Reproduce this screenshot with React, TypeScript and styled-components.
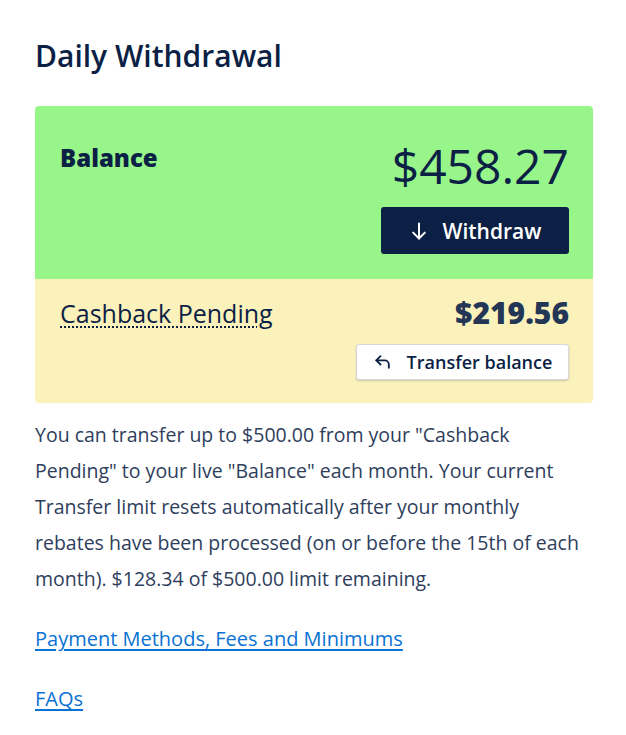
import React from 'react'
import styled, { createGlobalStyle } from 'styled-components'

const GlobalStyle = createGlobalStyle`
  body {
    margin: 0;
    background: #ffffff;
    font-family: 'Open Sans', 'Noto Sans', sans-serif;
  }
`

const Page = styled.div`
  padding: 32px 33px 20px 35px;
`

const Title = styled.h1`
  margin: 0 0 26px;
  font-size: 30px;
  font-weight: 600;
  color: #0c1f45;
  line-height: 48px;
`

const Card = styled.div`
  border-radius: 4px;
  overflow: hidden;
`

const Section = styled.div<{ $tone: 'green' | 'yellow' }>`
  background: ${(p) => (p.$tone === 'green' ? '#98f58a' : '#fbf1bb')};
  padding: ${(p) => (p.$tone === 'green' ? '30px 24px 25px 25px' : '16px 24px 23px 25px')};
  display: flex;
  flex-direction: column;
  align-items: stretch;
`

const Row = styled.div`
  display: flex;
  justify-content: space-between;
  align-items: flex-start;
`

const BalanceLabel = styled.div`
  font-size: 24px;
  font-weight: 800;
  color: #0c1f45;
  margin-top: 5px;
`

const BalanceAmount = styled.div`
  font-size: 48px;
  font-weight: 400;
  color: #0c1f45;
  line-height: 60px;
`

const PendingLabel = styled.span`
  font-size: 25px;
  color: #0c1f45;
  text-decoration: underline dotted #0c1f45;
  text-decoration-thickness: 2px;
  text-underline-offset: 3px;
  line-height: 36px;
`

const PendingAmount = styled.div`
  font-size: 30px;
  font-weight: 800;
  color: #243656;
  line-height: 36px;
`

const ButtonRow = styled.div<{ $gap: number }>`
  display: flex;
  justify-content: flex-end;
  margin-top: ${(p) => p.$gap}px;
`

const PrimaryButton = styled.button`
  display: flex;
  align-items: center;
  justify-content: center;
  gap: 14px;
  width: 188px;
  height: 47px;
  border: none;
  border-radius: 3px;
  background: #0c1f45;
  color: #ffffff;
  font-family: inherit;
  font-size: 21px;
  font-weight: 600;
  cursor: pointer;
`

const SecondaryButton = styled.button`
  display: flex;
  align-items: center;
  justify-content: center;
  gap: 14px;
  width: 213px;
  height: 36px;
  border: 1px solid #d4d8df;
  border-radius: 3px;
  background: #ffffff;
  box-shadow: 0 1px 2px rgba(0, 0, 0, 0.18);
  color: #0c1f45;
  font-family: inherit;
  font-size: 18px;
  font-weight: 600;
  cursor: pointer;
`

const Note = styled.p`
  margin: 14px 0 0;
  max-width: 550px;
  font-size: 19.5px;
  line-height: 36px;
  color: #2e3e5c;
`

const LinkItem = styled.a`
  display: block;
  margin-top: 24px;
  font-size: 20px;
  line-height: 36px;
  color: #0a72d4;
  text-decoration: underline;
  text-underline-offset: 3px;
`

const ArrowDown = () => (
  <svg width="20" height="20" viewBox="0 0 24 24" fill="none" stroke="currentColor" strokeWidth="2.4" strokeLinecap="round" strokeLinejoin="round">
    <path d="M12 3v18" />
    <path d="M5 14l7 7 7-7" />
  </svg>
)

const ReplyArrow = () => (
  <svg width="20" height="20" viewBox="0 0 24 24" fill="none" stroke="currentColor" strokeWidth="2.2" strokeLinecap="round" strokeLinejoin="round">
    <path d="M9 5L4 10l5 5" />
    <path d="M4 10h10a5 5 0 0 1 5 5v4" />
  </svg>
)

const App: React.FC = () => (
  <>
    <GlobalStyle />
    <Page>
      <Title>Daily Withdrawal</Title>
      <Card>
        <Section $tone="green">
          <Row>
            <BalanceLabel>Balance</BalanceLabel>
            <BalanceAmount>$458.27</BalanceAmount>
          </Row>
          <ButtonRow $gap={11}>
            <PrimaryButton>
              <ArrowDown />
              Withdraw
            </PrimaryButton>
          </ButtonRow>
        </Section>
        <Section $tone="yellow">
          <Row>
            <PendingLabel>Cashback Pending</PendingLabel>
            <PendingAmount>$219.56</PendingAmount>
          </Row>
          <ButtonRow $gap={13}>
            <SecondaryButton>
              <ReplyArrow />
              Transfer balance
            </SecondaryButton>
          </ButtonRow>
        </Section>
      </Card>
      <Note>
        You can transfer up to $500.00 from your "Cashback Pending" to your live "Balance" each month. Your current
        Transfer limit resets automatically after your monthly rebates have been processed (on or before the 15th of
        each month). $128.34 of $500.00 limit remaining.
      </Note>
      <LinkItem href="#">Payment Methods, Fees and Minimums</LinkItem>
      <LinkItem href="#">FAQs</LinkItem>
    </Page>
  </>
)

export default App
